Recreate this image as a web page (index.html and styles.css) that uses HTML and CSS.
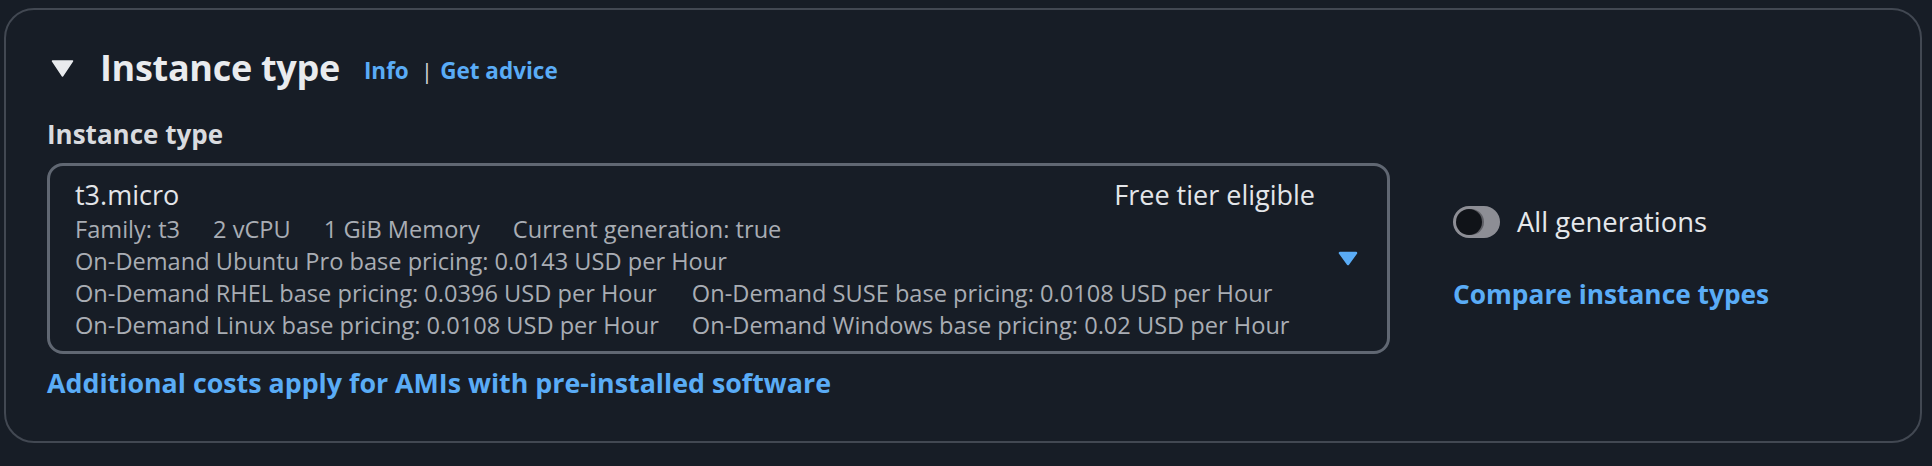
FILE: index.html
```html
<!DOCTYPE html>
<html>
<head>
<meta charset="utf-8">
<link rel="stylesheet" href="styles.css">
</head>
<body>
<section class="card">
  <header class="card-header">
    <svg class="expand-icon" width="23" height="17" viewBox="0 0 23 17"><path d="M1.5 1 H21.5 L11.5 16 Z" fill="#e9ebee" stroke="#e9ebee" stroke-width="1.5" stroke-linejoin="round"/></svg>
    <h2 class="title">Instance type</h2>
    <span class="header-links"><a class="info-link">Info</a><span class="divider">|</span><a class="info-link">Get advice</a></span>
  </header>
  <div class="field-label">Instance type</div>
  <div class="field-row">
    <div class="select">
      <div class="select-content">
        <div class="option-top">
          <span class="option-name">t3.micro</span>
          <span class="option-tag">Free tier eligible</span>
        </div>
        <div class="tags">
          <span>Family: t3</span><span>2 vCPU</span><span>1 GiB Memory</span><span>Current generation: true</span>
        </div>
        <div class="line">On-Demand Ubuntu Pro base pricing: 0.0143 USD per Hour</div>
        <div class="pricing">
          <span>On-Demand RHEL base pricing: 0.0396 USD per Hour</span>
          <span>On-Demand SUSE base pricing: 0.0108 USD per Hour</span>
          <span>On-Demand Linux base pricing: 0.0108 USD per Hour</span>
          <span>On-Demand Windows base pricing: 0.02 USD per Hour</span>
        </div>
      </div>
      <svg class="caret" width="20" height="15" viewBox="0 0 20 15"><path d="M2 2 H18 L10 13 Z" fill="#5aacf6" stroke="#5aacf6" stroke-width="2.5" stroke-linejoin="round"/></svg>
    </div>
    <div class="side">
      <div class="toggle-row">
        <span class="toggle"><span class="knob"></span></span>
        <span class="toggle-label">All generations</span>
      </div>
      <a class="side-link">Compare instance types</a>
    </div>
  </div>
  <a class="note-link">Additional costs apply for AMIs with pre-installed software</a>
</section>
</body>
</html>
```
FILE: styles.css
```css
html, body {
  margin: 0;
  padding: 0;
  background: #171d26;
}
body {
  padding: 8px 10px 0 4px;
  font-family: "Open Sans", "Noto Sans", sans-serif;
  color: #e3e5e9;
}
.card {
  width: 1918px;
  height: 435px;
  box-sizing: border-box;
  border: 2px solid #424852;
  border-radius: 30px;
  padding: 9px 0 0 41px;
}
.card-header {
  display: flex;
  align-items: center;
  height: 96px;
}
.expand-icon {
  margin-left: 4px;
  margin-right: 26px;
  margin-top: 2px;
}
.title {
  margin: 0;
  font-size: 36px;
  font-weight: 700;
  color: #e9ebee;
  letter-spacing: -0.3px;
}
.header-links {
  display: flex;
  align-items: center;
  margin-left: 24px;
  margin-top: 6px;
  font-size: 22.5px;
  font-weight: 700;
}
.info-link {
  color: #5aacf6;
}
.divider {
  color: #d0d2d6;
  font-weight: 400;
  margin: 0 7px 0 12px;
}
.field-label {
  font-size: 26px;
  font-weight: 700;
  color: #d9dbdf;
  line-height: 34px;
  margin-top: 2px;
}
.field-row {
  display: flex;
  align-items: flex-start;
  gap: 63px;
  margin-top: 12px;
}
.select {
  width: 1343px;
  height: 191px;
  box-sizing: border-box;
  border: 3px solid #606772;
  border-radius: 16px;
  display: flex;
  align-items: center;
  padding: 0 29px 0 25px;
}
.select-content {
  flex: 1;
  margin-right: 23px;
  align-self: flex-start;
  padding-top: 11px;
}
.option-top {
  display: flex;
  justify-content: space-between;
  font-size: 27px;
  line-height: 36px;
  color: #e3e5e9;
}
.tags, .line, .pricing {
  font-size: 23.6px;
  line-height: 32px;
  color: #a9adb4;
}
.tags {
  display: flex;
  gap: 33px;
}
.pricing {
  display: grid;
  grid-template-columns: auto auto;
  justify-content: start;
  column-gap: 33px;
}
.caret {
  flex: none;
}
.side {
  display: flex;
  flex-direction: column;
  padding-top: 40px;
}
.toggle-row {
  display: flex;
  align-items: center;
  gap: 17px;
}
.toggle {
  width: 47px;
  height: 32px;
  border-radius: 16px;
  background: #8d8e95;
  display: flex;
  align-items: center;
  padding-left: 3px;
  box-sizing: border-box;
}
.knob {
  width: 26px;
  height: 26px;
  border-radius: 50%;
  background: #101318;
  box-shadow: 2px 0 0 #5e5f65;
}
.toggle-label {
  font-size: 27.4px;
  color: #e6e8eb;
}
.side-link {
  margin-top: 36px;
  font-size: 26.3px;
  font-weight: 700;
  color: #5aacf6;
}
.note-link {
  display: block;
  margin-top: 10px;
  font-size: 26.8px;
  font-weight: 700;
  color: #5aacf6;
}
```
